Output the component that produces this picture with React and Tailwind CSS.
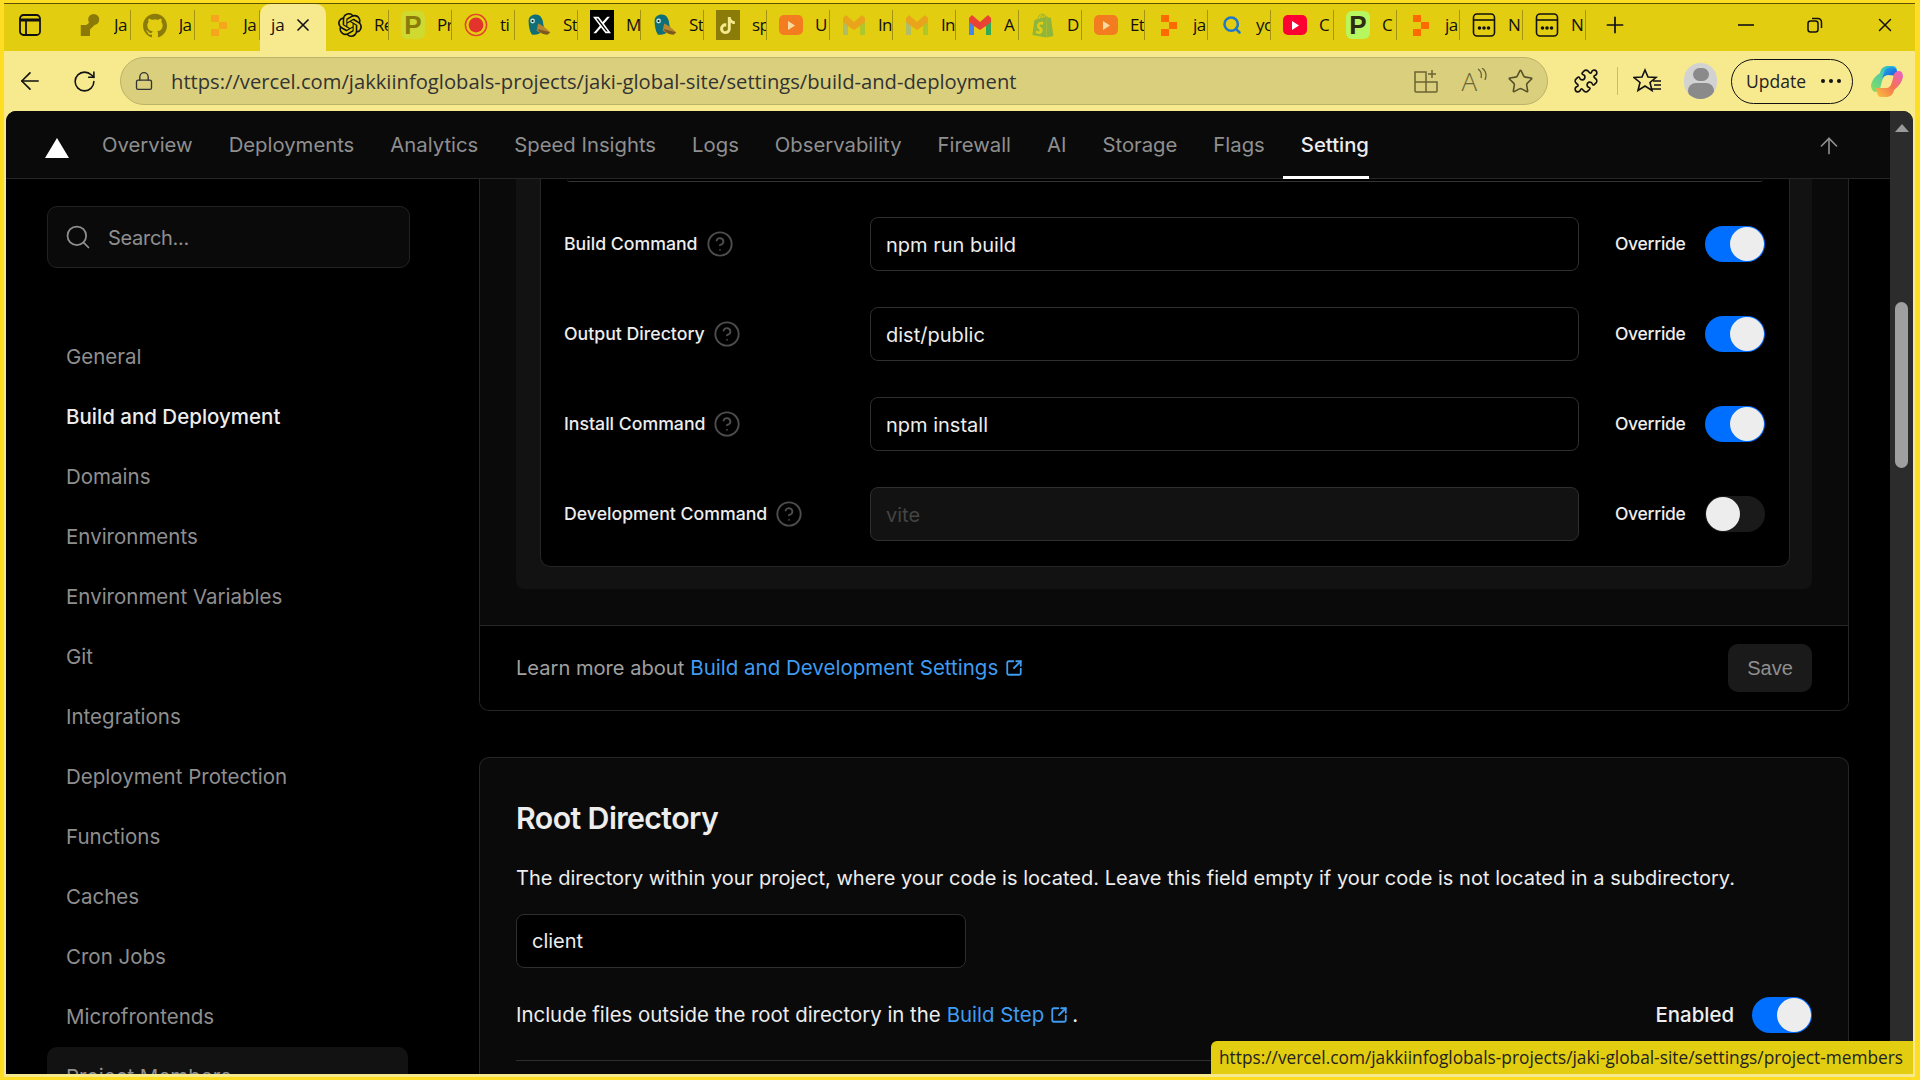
import {
  ArrowLeft, RotateCw, Lock, X, Plus, Star, Puzzle, Search, ArrowUp,
  CircleHelp, SquareArrowOutUpRight
} from 'lucide-react'
import { SiGithub, SiOpenai, SiX, SiTiktok, SiShopify } from 'react-icons/si'

const Wrench = () => (
  <svg width="26" height="26" viewBox="0 0 26 26" fill="#8b7a08">
    <circle cx="17" cy="7" r="6" />
    <path d="M3 13h6l5-4 4 4-5 5v7H3z" />
  </svg>
)

const Dots = ({ c1 = '#f6a61d', c2 = '#f6a61d' }) => (
  <svg width="24" height="24" viewBox="0 0 24 24">
    <rect x="4" y="2" width="8" height="7" fill={c1} />
    <rect x="12" y="9" width="8" height="7" fill={c2} />
    <rect x="4" y="16" width="8" height="7" fill={c1} />
  </svg>
)

const PTile = ({ bg, fg }) => (
  <div className={`w-[24px] h-[28px] rounded-[6px] flex items-center justify-center text-[26px] leading-none font-black ${bg} ${fg}`} style={{ fontFamily: '"Liberation Sans", sans-serif' }}>
    P
  </div>
)

const Rec = () => (
  <svg width="26" height="26" viewBox="0 0 26 26">
    <circle cx="13" cy="13" r="11.5" fill="none" stroke="#e2402c" strokeWidth="1.6" />
    <circle cx="13" cy="13" r="8" fill="#e2332c" />
  </svg>
)

const Duck = () => (
  <svg width="30" height="28" viewBox="0 0 30 28">
    <path d="M2 9c0-5 4-8 9-8s8 4 9 9c0 4 2 7 1 10-3 5-10 7-15 6-3-5-4-11-4-17z" fill="#0f6e78" />
    <path d="M14 12c5 2 10 6 15 11l-3 3c-5 0-10-2-14-5z" fill="#b9852f" />
    <path d="M13 19l16 4-3 3c-5 0-10-2-13-7z" fill="#7a5a1e" />
    <circle cx="7" cy="9" r="3" fill="#bfe6e2" />
    <circle cx="7" cy="9" r="1.3" fill="#111" />
  </svg>
)

const XTile = () => (
  <div className="w-[24px] h-[30px] bg-black flex items-center justify-center">
    <SiX size={18} color="#fff" />
  </div>
)

const TikTile = () => (
  <div className="w-[24px] h-[30px] bg-[#8b7b08] flex items-center justify-center">
    <SiTiktok size={17} color="#f5e98e" />
  </div>
)

const PlayTile = ({ bg = 'bg-[#f47c20]', fg = '#f8d9a0' }) => (
  <div className={`w-[24px] h-[20px] rounded-[5px] flex items-center justify-center ${bg}`}>
    <svg width="8" height="9" viewBox="0 0 8 9"><path d="M1 0l7 4.5L1 9z" fill={fg} /></svg>
  </div>
)

const Gmail = ({ faded }) => (
  <svg width="24" height="20" viewBox="0 0 24 20" className={faded ? 'opacity-60' : ''}>
    <path d="M1 3v17h5V8z" fill={faded ? '#8cb4a0' : '#4285f4'} />
    <path d="M23 3v17h-5V8z" fill={faded ? '#8cc63f' : '#34a853'} />
    <path d="M1 3l3-3 8 7 8-7 3 3v4l-5 4-6 4-6-4-5-4z" fill={faded ? '#f08a24' : '#ea4335'} />
  </svg>
)

const Win = () => (
  <svg width="24" height="26" viewBox="0 0 24 26" fill="none" stroke="#111" strokeWidth="1.6">
    <rect x="1.5" y="2" width="21" height="22" rx="3.5" />
    <path d="M1.5 8h21" />
    <circle cx="7.5" cy="16" r="1" fill="#111" />
    <circle cx="12" cy="16" r="1" fill="#111" />
    <circle cx="16.5" cy="16" r="1" fill="#111" />
  </svg>
)

const TABS_LEFT = [
  { icon: <Wrench />, label: 'Ja' },
  { icon: <SiGithub size={25} color="#8b7b0a" />, label: 'Ja' },
  { icon: <Dots />, label: 'Ja' },
]

const TABS_RIGHT = [
  { icon: <SiOpenai size={24} color="#111" />, label: 'Re' },
  { icon: <PTile bg="bg-[#cfd92f]" fg="text-[#8b7b0a]" />, label: 'Pr' },
  { icon: <Rec />, label: 'ti' },
  { icon: <Duck />, label: 'St' },
  { icon: <XTile />, label: 'M' },
  { icon: <Duck />, label: 'St' },
  { icon: <TikTile />, label: 'sp' },
  { icon: <PlayTile />, label: 'U' },
  { icon: <Gmail faded />, label: 'In' },
  { icon: <Gmail faded />, label: 'In' },
  { icon: <Gmail />, label: 'A' },
  { icon: <SiShopify size={25} color="#8fb53c" />, label: 'D' },
  { icon: <PlayTile />, label: 'Et' },
  { icon: <Dots c1="#ff6a00" c2="#ff6a00" />, label: 'ja' },
  { icon: <Search size={20} color="#1f78c8" strokeWidth={3} />, label: 'yo' },
  { icon: <PlayTile bg="bg-[#ff0033]" fg="#fff" />, label: 'C' },
  { icon: <PTile bg="bg-[#b6f75f]" fg="text-[#2f2a10]" />, label: 'C' },
  { icon: <Dots c1="#ff6a00" c2="#ff6a00" />, label: 'ja' },
  { icon: <Win />, label: 'N' },
  { icon: <Win />, label: 'N' },
]

const NAV = ['Overview', 'Deployments', 'Analytics', 'Speed Insights', 'Logs', 'Observability', 'Firewall', 'AI', 'Storage', 'Flags']

const SIDE = ['General', 'Build and Deployment', 'Domains', 'Environments', 'Environment Variables', 'Git', 'Integrations', 'Deployment Protection', 'Functions', 'Caches', 'Cron Jobs', 'Microfrontends', 'Project Members']

const ROWS = [
  { label: 'Build Command', value: 'npm run build', on: true },
  { label: 'Output Directory', value: 'dist/public', on: true },
  { label: 'Install Command', value: 'npm install', on: true },
  { label: 'Development Command', value: 'vite', on: false },
]

function Tab({ icon, label, width }) {
  return (
    <div className={`flex items-center h-full pb-[5px] shrink-0 ${width}`}>
      <div className="w-[24px] ml-[12px] flex justify-center shrink-0">{icon}</div>
      <div className="ml-[12px] flex-1 min-w-0 overflow-hidden text-[17px] tracking-[-0.6px] text-[#111] whitespace-nowrap">{label}</div>
      <div className="h-[30px] w-[1px] bg-[#a3950f] shrink-0" />
    </div>
  )
}

function Toggle({ on }) {
  return (
    <div className={`w-[60px] h-[36px] rounded-full flex items-center px-[1px] shrink-0 ${on ? 'bg-[#006efe] justify-end' : 'bg-[#1a1a1a] justify-start'}`}>
      <div className="w-[34px] h-[34px] rounded-full bg-[#ededed]" />
    </div>
  )
}

export default function App() {
  return (
    <div className="w-[1920px] h-[1080px] bg-[#ffdd22] pl-[4px] pr-[5px] pt-[3px] pb-[3px] overflow-hidden" style={{ fontFamily: '"Open Sans", sans-serif' }}>
      <div className="h-full flex flex-col bg-[#f7e98e] border-t border-[#5c5200]">
        {/* Tab strip */}
        <div className="h-[47px] shrink-0 bg-[#e3cd10] flex items-stretch">
          <div className="w-[62px] flex items-center justify-start pl-[15px] pb-[5px] shrink-0">
            <svg width="22" height="24" viewBox="0 0 22 24" fill="none" stroke="#111" strokeWidth="1.8">
              <rect x="1" y="2" width="20" height="20" rx="3.5" />
              <path d="M1 7h20" strokeWidth="3" />
              <path d="M7 7v15" />
            </svg>
          </div>
          {TABS_LEFT.map((t, i) => <Tab key={i} {...t} width="w-[64.67px]" />)}
          <div className="w-[66px] shrink-0 bg-[#f7e98e] rounded-t-[10px] flex items-center pl-[11px] pb-[5px] text-[17px] text-[#111]">
            <span>ja</span>
            <X size={20} className="ml-[8px]" color="#111" />
          </div>
          {TABS_RIGHT.map((t, i) => <Tab key={i} {...t} width="w-[63px]" />)}
          <div className="w-[58px] flex items-center justify-center pb-[5px] shrink-0">
            <Plus size={26} color="#111" strokeWidth={1.6} />
          </div>
          <div className="flex-1 flex items-center justify-end pb-[5px]">
            <svg width="16" height="2" viewBox="0 0 16 2" className="mr-[53px]"><path d="M0 1h16" stroke="#111" strokeWidth="1.6" /></svg>
            <svg width="16" height="16" viewBox="0 0 16 16" fill="none" stroke="#111" strokeWidth="1.5" className="mr-[51px]">
              <rect x="1" y="4" width="10" height="11" rx="2.5" />
              <path d="M5 1.5h6a3.5 3.5 0 0 1 3.5 3.5v6" />
            </svg>
            <X size={22} color="#111" strokeWidth={1.6} className="mr-[19px]" />
          </div>
        </div>

        {/* Toolbar */}
        <div className="h-[60px] shrink-0 flex items-center">
          <ArrowLeft size={28} color="#111" strokeWidth={1.4} className="ml-[12px]" />
          <RotateCw size={25} color="#111" strokeWidth={1.5} className="ml-[28px]" />
          <div className="ml-[23px] w-[1428px] h-[48px] rounded-full bg-[#d9cf7d] border border-[#bcb36a] flex items-center shrink-0">
            <Lock size={20} color="#333" strokeWidth={1.6} className="ml-[13px]" />
            <span className="ml-[17px] pt-[1px] text-[20.2px] text-[#333] whitespace-nowrap">https://vercel.com/jakkiinfoglobals-projects/jaki-global-site/settings/build-and-deployment</span>
            <div className="ml-auto flex items-center">
              <svg width="24" height="26" viewBox="0 0 24 26" fill="none" stroke="#6b6433" strokeWidth="1.5">
                <path d="M1 4h11v20H2a1 1 0 0 1-1-1zM1 14h22M12 14h11v9a1 1 0 0 1-1 1H12zM18 2v8M14 6h8" />
              </svg>
              <div className="ml-[23px] flex items-start text-[#6b6433]">
                <span className="text-[26px] leading-none font-light" style={{ fontFamily: '"Open Sans", sans-serif' }}>A</span>
                <svg width="10" height="14" viewBox="0 0 10 14" fill="none" stroke="#6b6433" strokeWidth="1.3"><path d="M1 1c3 2 4 5 3 9M5 0c4 3 5 7 3 12" /></svg>
              </div>
              <Star size={27} color="#57512a" strokeWidth={1.4} className="ml-[20px] mr-[13px]" />
            </div>
          </div>
          <Puzzle size={26} color="#111" strokeWidth={1.5} className="ml-[25px]" />
          <div className="w-[1px] h-[28px] bg-[#c9bd6c] ml-[18px]" />
          <svg width="30" height="26" viewBox="0 0 30 26" fill="none" stroke="#111" strokeWidth="1.6" className="ml-[15px]">
            <path d="M12 2l3 7 8 .5-6 5 2 8-7-4.5-7 4.5 2-8-6-5 8-.5z" />
            <path d="M20 13h8M21 17h7M18 21h10" />
          </svg>
          <div className="ml-[21px] w-[33px] h-[36px] rounded-full bg-[#d2d2d2] overflow-hidden flex flex-col items-center">
            <div className="w-[16px] h-[16px] rounded-full bg-[#8a8a8a] mt-[5px]" />
            <div className="w-[26px] h-[20px] rounded-full bg-[#8a8a8a] mt-[2px]" />
          </div>
          <div className="ml-[14px] w-[122px] h-[45px] rounded-full border-[1.5px] border-[#111] flex items-center pl-[14px] text-[17.5px] text-[#222]">
            Update
            <div className="ml-[15px] flex gap-[4px]">
              <span className="w-[4px] h-[4px] rounded-full bg-[#111]" />
              <span className="w-[4px] h-[4px] rounded-full bg-[#111]" />
              <span className="w-[4px] h-[4px] rounded-full bg-[#111]" />
            </div>
          </div>
          <svg width="34" height="34" viewBox="0 0 34 34" className="ml-[17px]">
            <defs>
              <linearGradient id="cp1" x1="0" y1="0" x2="1" y2="1"><stop offset="0" stopColor="#1db6e8" /><stop offset="0.6" stopColor="#1e6fe0" /><stop offset="1" stopColor="#6a3fd8" /></linearGradient>
              <linearGradient id="cp2" x1="0" y1="1" x2="1" y2="0"><stop offset="0" stopColor="#f9c53c" /><stop offset="0.5" stopColor="#f4734e" /><stop offset="1" stopColor="#e95fd0" /></linearGradient>
              <linearGradient id="cp3" x1="0" y1="1" x2="1" y2="0"><stop offset="0" stopColor="#8be05a" /><stop offset="1" stopColor="#1db6e8" /></linearGradient>
            </defs>
            <path d="M10 9c1-5 4-7 8-7h5c2 0 3 1 4 4l1 5H18c-3 0-5 2-6 6l-2 8c-1 2-3 3-5 3C2 27 1 24 1 21c1-5 4-9 9-12z" fill="url(#cp3)" />
            <path d="M15 6c2-3 8-4 11-1l3 7-11-1c-3 0-5 2-6 4z" fill="url(#cp1)" />
            <path d="M24 26c-1 5-4 7-8 7h-5c-2 0-3-1-4-4l-1-5h10c3 0 5-2 6-6l2-8c1-2 3-3 5-3 3 0 4 3 4 6-1 5-4 9-9 13z" fill="url(#cp2)" />
          </svg>
        </div>

        {/* Page */}
        <div className="flex-1 min-h-0 pl-[2px] pr-[2px] pb-[3px]">
          <div className="h-full relative flex rounded-t-[10px] overflow-hidden bg-black" style={{ fontFamily: 'Inter, sans-serif' }}>
            <div className="flex-1 min-w-0 flex flex-col">
              {/* Top nav */}
              <header className="h-[68px] shrink-0 bg-[#0a0a0a] border-b border-[#262626] flex items-stretch relative">
                <svg width="24" height="20" viewBox="0 0 24 20" className="ml-[39px] mt-[27px]"><path d="M12 0l12 20H0z" fill="#fff" /></svg>
                <nav className="flex items-stretch ml-[33px] gap-[36px] text-[20.3px] text-[#8f8f8f]">
                  {NAV.map(n => <div key={n} className="flex items-center pt-[1px]">{n}</div>)}
                  <div className="flex items-center pl-[18px] -ml-[18px] text-[#ededed] font-medium border-b-[3px] border-white -mb-[1px] pt-[3px]">Setting</div>
                </nav>
                <ArrowUp size={26} color="#8f8f8f" strokeWidth={1.5} className="absolute right-[48px] top-[22px]" />
              </header>

              <div className="flex-1 min-h-0 flex overflow-hidden">
                {/* Sidebar */}
                <aside className="w-[473px] shrink-0 bg-black pl-[41px] pt-[27px]">
                  <div className="w-[363px] h-[62px] rounded-[10px] bg-[#0a0a0a] border border-[#222] flex items-center pl-[16px]">
                    <Search size={28} color="#8f8f8f" strokeWidth={1.5} />
                    <span className="ml-[16px] pt-[1px] text-[20px] text-[#8f8f8f] tracking-[-0.3px]">Search...</span>
                  </div>
                  <div className="mt-[59px] w-[361px]">
                    {SIDE.map(s => (
                      <div
                        key={s}
                        className={`h-[60px] rounded-t-[10px] flex items-center pl-[19px] text-[20.5px] ${s === 'Build and Deployment' ? 'text-[#ededed] font-medium' : 'text-[#8f8f8f]'} ${s === 'Project Members' ? 'bg-[#121212]' : ''}`}
                      >
                        {s}
                      </div>
                    ))}
                  </div>
                </aside>

                {/* Main */}
                <main className="flex-1 min-w-0 pr-[41px]">
                  <section className="rounded-b-[10px] border-x border-b border-[#262626] overflow-hidden">
                    <div className="bg-[#0a0a0a] px-[36px] pb-[36px]">
                      <div className="bg-[#121212] pl-[24px] pr-[22px] pb-[22px] rounded-b-[8px]">
                        <div className="bg-black border-x border-b border-[#262626] rounded-b-[10px] pb-[25px]">
                          <div className="h-[3px] mx-[26px] border-b border-[#333] rounded-b-[8px]" />
                          <div className="pt-[35px] pl-[23px] pr-[24px] flex flex-col gap-[36px]">
                            {ROWS.map(r => (
                              <div key={r.label} className="h-[54px] flex items-center">
                                <div className="w-[306px] shrink-0 flex items-center text-[17.7px] font-medium text-[#ededed]">
                                  <span className="pt-[1px]">{r.label}</span>
                                  <CircleHelp size={28} color="#4d4d4d" strokeWidth={1.6} className="ml-[8px]" />
                                </div>
                                <div className={`w-[709px] h-[54px] rounded-[8px] border border-[#2e2e2e] flex items-center pl-[15px] pt-[1px] text-[20px] ${r.on ? 'bg-black text-[#ededed]' : 'bg-[#121212] text-[#444]'}`}>
                                  {r.value}
                                </div>
                                <span className="ml-[36px] pt-[1px] text-[17.5px] font-medium text-[#ededed] tracking-[-0.3px]">Override</span>
                                <div className="ml-auto"><Toggle on={r.on} /></div>
                              </div>
                            ))}
                          </div>
                        </div>
                      </div>
                    </div>
                    <div className="h-[85px] bg-black border-t border-[#262626] flex items-center justify-between px-[36px]">
                      <div className="flex items-center text-[20.5px] text-[#a1a1a1]">
                        <span className="text-[20.1px]">Learn more about</span>
                        <span className="ml-[6px] text-[#3f9cf2]">Build and Development Settings</span>
                        <SquareArrowOutUpRight size={18} color="#3f9cf2" strokeWidth={2.4} className="ml-[7px]" />
                      </div>
                      <div className="w-[84px] h-[48px] rounded-[10px] bg-[#1a1a1a] flex items-center justify-center text-[20px] text-[#8f8f8f]" style={{ fontFamily: '"Liberation Sans", sans-serif' }}>Save</div>
                    </div>
                  </section>

                  <section className="mt-[46px] rounded-t-[10px] border-x border-t border-[#262626] bg-[#0a0a0a] px-[36px] pt-[42px] h-[400px]">
                    <h2 className="text-[30.3px] leading-[36px] font-semibold text-[#ededed] tracking-[-0.6px]">Root Directory</h2>
                    <p className="mt-[28px] text-[20px] leading-[28px] text-[#ededed] tracking-[0.03px] whitespace-nowrap">The directory within your project, where your code is located. Leave this field empty if your code is not located in a subdirectory.</p>
                    <div className="mt-[22px] w-[450px] h-[54px] rounded-[8px] bg-black border border-[#2e2e2e] flex items-center pl-[15px] text-[20px] text-[#ededed]">client</div>
                    <div className="mt-[10px] h-[74px] flex items-center text-[20.4px] text-[#ededed]">
                      Include files outside the root directory in the
                      <span className="ml-[6px] text-[#3f9cf2]">Build Step</span>
                      <SquareArrowOutUpRight size={18} color="#3f9cf2" strokeWidth={2.4} className="ml-[6px]" />
                      <span className="ml-[4px]">.</span>
                      <span className="ml-auto font-medium">Enabled</span>
                      <div className="ml-[18px]"><Toggle on /></div>
                    </div>
                    <div className="mt-[8px] border-t border-[#2e2e2e]" />
                  </section>
                </main>
              </div>
            </div>

            {/* Scrollbar */}
            <div className="w-[23px] shrink-0 bg-[#2c2c2c] flex flex-col items-center">
              <div className="mt-[13px] w-0 h-0 border-x-[7px] border-x-transparent border-b-[8px] border-b-[#9a9a9a]" />
              <div className="mt-[170px] w-[13px] h-[166px] rounded-full bg-[#9f9f9f]" />
            </div>

            {/* Status bubble */}
            <div className="absolute right-0 bottom-0 w-[702px] h-[33px] bg-[#e3cd10] rounded-tl-[6px] flex items-center pl-[8px] pt-[1px] text-[17.3px] text-[#222] whitespace-nowrap" style={{ fontFamily: '"Open Sans", sans-serif' }}>
              https://vercel.com/jakkiinfoglobals-projects/jaki-global-site/settings/project-members
            </div>
          </div>
        </div>
      </div>
    </div>
  )
}
